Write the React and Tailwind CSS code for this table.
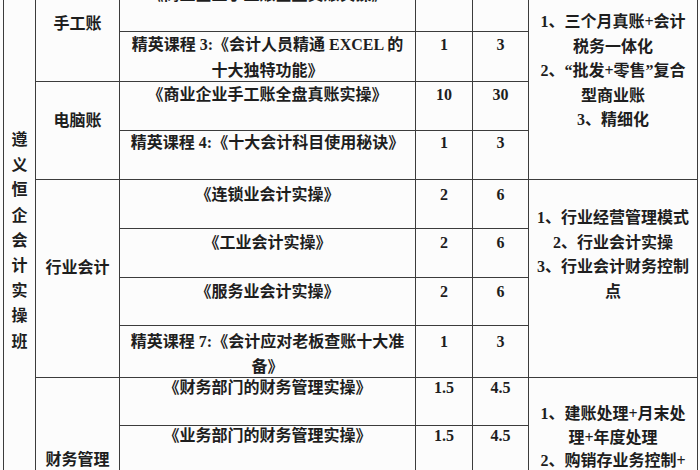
import React from "react";

const FONT = { fontFamily: '"Liberation Serif", "Noto Sans CJK SC", serif' };

const rowStart = [
  "row-start-1",
  "row-start-2",
  "row-start-3",
  "row-start-4",
  "row-start-5",
  "row-start-6",
  "row-start-7",
  "row-start-8",
  "row-start-9",
  "row-start-10",
];

const rows = [
  { c: "pt-[2px] leading-[20px]", t: "《商业企业手工账全盘真账实操》", a: "10", b: "30" },
  {
    c: "pt-0 leading-[26px]",
    t: (
      <>
        精英课程 3:《会计人员精通 EXCEL 的
        <br />
        十大独特功能》
      </>
    ),
    a: "1",
    b: "3",
  },
  { c: "pt-[3px] leading-[20px]", t: "《商业企业手工账全盘真账实操》", a: "10", b: "30" },
  { c: "pt-[2px] leading-[20px]", t: "精英课程 4:《十大会计科目使用秘诀》", a: "1", b: "3" },
  { c: "pt-[5px] leading-[20px]", t: "《连锁业会计实操》", a: "2", b: "6" },
  { c: "pt-[4px] leading-[20px]", t: "《工业会计实操》", a: "2", b: "6" },
  { c: "pt-[4px] leading-[20px]", t: "《服务业会计实操》", a: "2", b: "6" },
  {
    c: "pt-[3px] leading-[25px]",
    t: (
      <>
        精英课程 7:《会计应对老板查账十大准
        <br />
        备》
      </>
    ),
    a: "1",
    b: "3",
  },
  { c: "pt-0 leading-[20px]", t: "《财务部门的财务管理实操》", a: "1.5", b: "4.5" },
  { c: "pt-0 leading-[20px]", t: "《业务部门的财务管理实操》", a: "1.5", b: "4.5" },
];

const cell = "bg-[#fcfcfc] text-center";

export default function App() {
  return (
    <div
      className="w-[700px] h-[470px] overflow-hidden bg-[#fcfcfc] text-[#1e1e1e] text-[16px] font-bold"
      style={FONT}
    >
      <div className="ml-[3px] mt-[-18px] w-max bg-[#3c3c3c] p-px grid gap-px grid-cols-[31px_83px_295px_56px_55px_168px] grid-rows-[48px_49px_48px_48px_48px_48px_47px_51px_47px_48px]">
        {/* column 1 */}
        <div className={`${cell} col-start-1 row-start-1 row-span-10 flex flex-col items-center pt-[144px] leading-[25.2px]`}>
          {"遵义恒企会计实操班".split("").map((ch, i) => (
            <span key={i}>{ch}</span>
          ))}
        </div>

        {/* column 2 */}
        <div className={`${cell} col-start-2 row-start-1 row-span-2 flex items-center justify-center pb-[17px]`}>
          手工账
        </div>
        <div className={`${cell} col-start-2 row-start-3 row-span-2 flex items-center justify-center pb-[20px]`}>
          电脑账
        </div>
        <div className={`${cell} col-start-2 row-start-5 row-span-4 flex items-center justify-center pb-[22px]`}>
          行业会计
        </div>
        <div className={`${cell} col-start-2 row-start-9 row-span-2 pt-[70px] leading-[24px]`}>
          财务管理
        </div>

        {/* columns 3-5 */}
        {rows.map((r, i) => (
          <React.Fragment key={i}>
            <div className={`${cell} col-start-3 ${rowStart[i]} ${r.c}`}>{r.t}</div>
            <div className={`${cell} col-start-4 ${rowStart[i]} ${r.c}`}>{r.a}</div>
            <div className={`${cell} col-start-5 ${rowStart[i]} ${r.c}`}>{r.b}</div>
          </React.Fragment>
        ))}

        {/* column 6 */}
        <div className={`${cell} col-start-6 row-start-1 row-span-4 pt-[27px] leading-[24.5px]`}>
          1、三个月真账+会计
          <br />
          税务一体化
          <br />
          2、“批发+零售”复合
          <br />
          型商业账
          <br />
          3、精细化
        </div>
        <div className={`${cell} col-start-6 row-start-5 row-span-4 pt-[26px] leading-[24.5px]`}>
          1、行业经营管理模式
          <br />
          2、行业会计实操
          <br />
          3、行业会计财务控制
          <br />
          点
        </div>
        <div className={`${cell} col-start-6 row-start-9 row-span-2 pt-[24px] leading-[23.5px]`}>
          1、建账处理+月末处
          <br />
          理+年度处理
          <br />
          2、购销存业务控制+
        </div>
      </div>
    </div>
  );
}
